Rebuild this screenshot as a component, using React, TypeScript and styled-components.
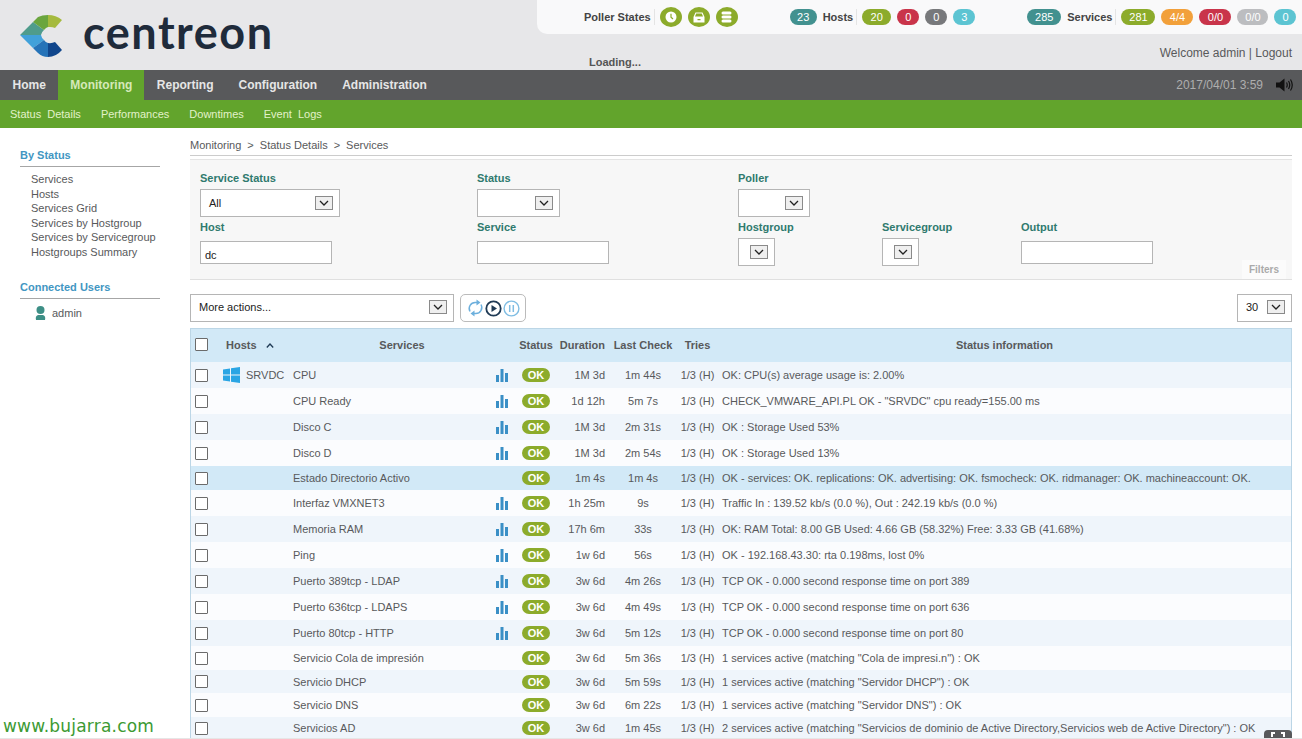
import React from "react";
import styled, { createGlobalStyle } from "styled-components";

const Global = createGlobalStyle`
  html, body { margin: 0; padding: 0; height: 739px; overflow: hidden; background: #fff; }
  body { font-family: "Liberation Sans", Arial, sans-serif; font-size: 11px; color: #58595b; }
  * { box-sizing: border-box; }
`;

const Page = styled.div`
  width: 1302px; height: 739px; position: relative; overflow: hidden;
  display: flex; flex-direction: column; background: #fff;
`;
const Header = styled.header`
  height: 70px; flex: none; background: #e7e7e9; display: flex; justify-content: space-between;
`;
const Brand = styled.div`
  display: flex; align-items: flex-start; padding: 15px 0 0 20px; gap: 21px;
`;
const BrandName = styled.span`
  font-family: "Lato", sans-serif; font-weight: 700; font-size: 45px; line-height: 40px;
  color: #1f2b3b; letter-spacing: 1.5px; margin-top: -3px;
`;
const HeaderRight = styled.div`
  width: 765px; flex: none; display: flex; flex-direction: column;
`;
const TopPanel = styled.div`
  height: 34px; flex: none; background: #f9f9fa; border-bottom-left-radius: 10px;
  display: flex; align-items: center; padding: 0 0 0 47px; color: #3a3a3a;
`;
const TopLabel = styled.span`
  font-weight: 700; font-size: 11px; color: #444; white-space: nowrap;
`;
const TopSep = styled.span`
  width: 1px; height: 16px; background: #e4e4e4; margin: 0 5px 0 3px;
`;
const Round = styled.span`
  width: 22px; height: 20px; border-radius: 50%; background: #8cab2b; margin-right: 6px;
  display: flex; align-items: center; justify-content: center;
`;
const Pill = styled.span<{ $bg: string; $w: number; $ml?: number; $mr?: number }>`
  height: 16px; border-radius: 9px; background: ${p => p.$bg}; width: ${p => p.$w}px;
  margin-left: ${p => p.$ml ?? 0}px; margin-right: ${p => p.$mr ?? 6}px;
  color: #fff; font-size: 11px; display: flex; align-items: center; justify-content: center;
`;
const Welcome = styled.div`
  text-align: right; padding: 12px 10px 0 0; font-size: 12px; color: #58595b; line-height: 14px;
`;
const Loading = styled.div`
  margin-top: -4px; padding-left: 52px; font-weight: 700; font-size: 11px; color: #555; line-height: 13px;
`;
const Nav = styled.nav`
  height: 30px; flex: none; background: #58595b; display: flex; align-items: stretch;
`;
const NavItem = styled.div<{ $active?: boolean }>`
  display: flex; align-items: center; padding: ${p => (p.$active ? "0 12px" : "0 12.5px")};
  font-weight: 700; font-size: 12px; white-space: nowrap;
  background: ${p => (p.$active ? "#62a42c" : "transparent")};
  color: ${p => (p.$active ? "#d6e9b9" : "#e6e6e6")};
`;
const NavRight = styled.div`
  margin-left: auto; display: flex; align-items: center; padding-right: 9px; gap: 13px;
  color: #aeaeae; font-size: 12px;
`;
const SubNav = styled.div`
  height: 28px; flex: none; background: #62a42c; display: flex; align-items: center;
  padding-left: 10px; gap: 20px; color: #e3f2c9; font-size: 11px; word-spacing: 3px;
`;
const Body = styled.div`
  flex: 1; display: flex; min-height: 0;
`;
const Side = styled.aside`
  width: 190px; flex: none; padding: 20px 0 0 20px;
`;
const SideTitle = styled.div<{ $mt?: number }>`
  width: 140px; font-weight: 700; font-size: 11px; color: #4296c2; height: 19px; line-height: 14px;
  border-bottom: 1px solid #a6a6a6; margin-top: ${p => p.$mt ?? 0}px;
`;
const SideList = styled.div`
  padding: 5px 0 0 11px; line-height: 14.6px; color: #58595b; font-size: 11px;
`;
const UserRow = styled.div`
  display: flex; align-items: center; gap: 6px; padding: 7px 0 0 15px; font-size: 11px; color: #58595b;
`;
const Main = styled.main`
  width: 1102px; flex: none; display: flex; flex-direction: column; position: relative;
`;
const Crumb = styled.div`
  height: 28px; padding-top: 11px; line-height: 13px; font-size: 11px; color: #58595b;
  border-bottom: 1px solid #ccc;
`;
const CrumbSep = styled.span`
  margin: 0 6px;
`;
const Filters = styled.section`
  margin-top: 3px; height: 121px; background: #f7f7f7; border-top: 1px solid #e4e4e4;
  border-bottom: 1px solid #e0e0e0; padding: 12px 0 0 10px; position: relative;
  display: grid; grid-template-columns: 277px 261px 144px 139px 1fr; grid-template-rows: 49px 1fr;
`;
const Field = styled.div`
  display: flex; flex-direction: column; align-items: flex-start;
`;
const Label = styled.label<{ $gap: number }>`
  font-weight: 700; font-size: 11px; line-height: 13px; color: #2f7a6e; margin-bottom: ${p => p.$gap}px;
`;
const Select = styled.div<{ $w: number; $pad?: number }>`
  width: ${p => p.$w}px; height: 28px; border: 1px solid #b5b5b5; background: #fff;
  display: flex; align-items: center; justify-content: space-between;
  padding: 0 6px 0 ${p => p.$pad ?? 8}px; font-size: 11px; color: #222; flex: none;
`;
const ActionSelect = styled(Select)`
  padding-bottom: 2px;
`;
const Arrow = styled.span`
  width: 18px; height: 14px; border: 1px solid #8a8a8a; background: #efefef; flex: none;
  display: flex; align-items: center; justify-content: center;
`;
const Input = styled.div`
  width: 132px; height: 23px; border: 1px solid #b5b5b5; background: #fff; padding: 0 4px;
  font-size: 11px; color: #222; line-height: 26px;
`;
const FilterTab = styled.div`
  position: absolute; right: 6px; bottom: 0; width: 44px; height: 19px; background: #fbfbfb;
  color: #aaa; font-weight: 700; font-size: 10px; line-height: 20px; text-align: center;
`;
const Actions = styled.div`
  height: 28px; margin-top: 14px; display: flex; align-items: center; gap: 6px;
`;
const IconGroup = styled.div`
  width: 66px; height: 28px; border: 1px solid #bbb; border-radius: 5px; background: #fff;
  display: flex; align-items: center; justify-content: center; gap: 1px;
`;
const PageSize = styled.div`
  margin-left: auto;
`;
const Table = styled.div`
  margin-top: 6px; border: 1px solid #bcd6e6; border-bottom: 0; flex: 1; min-height: 0; overflow: hidden;
`;
const cols = "31px 71px 196px 26px 42px 52px 68px 41px 1fr";
const HeadRow = styled.div`
  height: 33px; padding-bottom: 2px; background: #d2e9f7; display: grid; grid-template-columns: ${cols}; align-items: center;
  font-weight: 700; font-size: 11px; color: #58595b;
`;
const Row = styled.div<{ $h: number; $tone: "a" | "b" | "hl" }>`
  height: ${p => p.$h}px; display: grid; grid-template-columns: ${cols}; align-items: center;
  font-size: 11px; color: #58595b;
  background: ${p => (p.$tone === "hl" ? "#d2e9f7" : p.$tone === "a" ? "#eff5fb" : "#fbfcfe")};
`;
const Check = styled.span`
  width: 13px; height: 13px; border: 1px solid #6b6b6b; background: #fff; border-radius: 1px; margin-left: 4px; display: block;
`;
const Center = styled.span<{ $pl?: number }>`
  text-align: center; white-space: nowrap; padding-left: ${p => p.$pl ?? 0}px;
`;
const RightCell = styled.span`
  text-align: right; white-space: nowrap; padding-right: 4px;
`;
const HostCell = styled.span`
  display: flex; align-items: center; gap: 6px; padding-left: 1px;
`;
const HostsHead = styled.span`
  display: flex; align-items: center; gap: 9px; padding-left: 4px;
`;
const Info = styled.span`
  padding-left: 4px; white-space: nowrap;
`;
const Ok = styled.span`
  width: 28px; height: 14px; border-radius: 8px; background: #8cab2b; color: #fff; font-weight: 700;
  font-size: 11px; line-height: 14px; text-align: center; justify-self: center; display: block;
`;
const Watermark = styled.div`
  position: absolute; left: 3px; top: 715px; font-family: "DejaVu Sans", sans-serif; font-size: 17px;
  line-height: 22px; color: #3c9a33; letter-spacing: 0.2px;
`;
const Full = styled.div`
  position: absolute; left: 1264px; top: 730px; width: 28px; height: 12px; background: #58595b;
  border-radius: 4px 4px 0 0; display: flex; justify-content: center; padding-top: 2px;
`;
const Foot = styled.div`
  position: absolute; left: 0; right: 0; bottom: 0; height: 1px; background: #e6e6e6;
`;

const Logo = () => (
  <svg width="42" height="42" viewBox="20 15 42 42">
    <path fill="#4f9c8c" d="M20 35 L33 22 L44 30 Q41.5 32 41 35 Z" />
    <path fill="#6aa53e" d="M33 22 L38 17 Q42 15 48 15 L48 27 Q46 27.5 44 30 Z" />
    <path fill="#a5ba3e" d="M48 15 Q56 15 62 20 L55 28 Q52 26.5 48 27 Z" />
    <path fill="#41a1da" d="M20 35 L41 35 Q41.5 38 44 40 L33 48 Z" />
    <path fill="#2573b8" d="M33 48 L44 40 Q46 43 48 43 L48 57 Q42 57 38 53 Z" />
    <path fill="#10468c" d="M48 43 Q52 43.5 55 42 L62 50 Q56 57 48 57 Z" />
  </svg>
);
const ClockIcon = () => (
  <svg width="12" height="12" viewBox="0 0 12 12">
    <circle cx="6" cy="6" r="5.5" fill="#fff" />
    <path d="M6 2.8V6.2L8 8" stroke="#8cab2b" strokeWidth="1.2" fill="none" />
  </svg>
);
const BoxIcon = () => (
  <svg width="12" height="11" viewBox="0 0 12 11">
    <path fill="#fff" d="M2.5 0.5h7l2 4.5v5.5H.5V5z" />
    <path fill="#8cab2b" d="M3.2 1.6h5.6l1.2 3H2zM4.5 7h3v1.2h-3z" />
  </svg>
);
const DbIcon = () => (
  <svg width="11" height="12" viewBox="0 0 11 12">
    <rect x="0.5" y="0.5" width="10" height="3" rx="1.5" fill="#fff" />
    <rect x="0.5" y="4.5" width="10" height="3" rx="1.5" fill="#fff" />
    <rect x="0.5" y="8.5" width="10" height="3" rx="1.5" fill="#fff" />
  </svg>
);
const Speaker = () => (
  <svg width="17" height="14" viewBox="0 0 17 14">
    <path fill="#111" d="M0 4.5h3.5L8.5 .5v13l-5-4H0z" />
    <path fill="none" stroke="#111" strokeWidth="1.2" d="M10.5 4.5q1.5 2.5 0 5M12.5 3q2.5 4 0 8M14.5 1.5q3.5 5.5 0 11" />
  </svg>
);
const Chevron = () => (
  <svg width="10" height="6" viewBox="0 0 10 6">
    <path d="M1 1l4 4 4-4" fill="none" stroke="#222" strokeWidth="1.3" />
  </svg>
);
const User = () => (
  <svg width="11" height="14" viewBox="0 0 11 14">
    <circle cx="5.5" cy="4" r="4" fill="#3d8f86" />
    <path fill="#3d8f86" d="M1 14q-1-4 2-5h5q3 1 2 5z" />
  </svg>
);
const Sync = () => (
  <svg width="17" height="18" viewBox="0 0 17 18">
    <g fill="none" stroke="#6db0dd" strokeWidth="1.4">
      <path d="M3 12.5A6 6 0 0 1 8.5 3.5H10" />
      <path d="M14 5.5A6 6 0 0 1 8.5 14.5H7" />
    </g>
    <path fill="#6db0dd" d="M9.5 0.5l4 3-4 3zM7.5 11.5l-4 3 4 3z" />
  </svg>
);
const Play = () => (
  <svg width="17" height="17" viewBox="0 0 17 17">
    <circle cx="8.5" cy="8.5" r="7.2" fill="none" stroke="#1f3a55" strokeWidth="1.8" />
    <path fill="#1f3a55" d="M6.5 5l5.5 3.5L6.5 12z" />
  </svg>
);
const Pause = () => (
  <svg width="17" height="17" viewBox="0 0 17 17">
    <circle cx="8.5" cy="8.5" r="7.4" fill="none" stroke="#7fbde3" strokeWidth="1.4" />
    <path stroke="#7fbde3" strokeWidth="1.5" d="M6.7 5v7M10.3 5v7" />
  </svg>
);
const Bars = () => (
  <svg width="12" height="13" viewBox="0 0 12 13" style={{ justifySelf: "center" }}>
    <rect x="0" y="6" width="3" height="7" fill="#3a8fc6" />
    <rect x="4.5" y="0" width="3" height="13" fill="#3a8fc6" />
    <rect x="9" y="4" width="3" height="9" fill="#3a8fc6" />
  </svg>
);
const Win = () => (
  <svg width="17" height="16" viewBox="0 0 17 16">
    <path fill="#2aa5e4" d="M0 2.6L7 1.5V7.5H0zM8 1.3L17 0V7.5H8zM0 8.5H7V14.5L0 13.4zM8 8.5H17V16L8 14.7z" />
  </svg>
);
const SortUp = () => (
  <svg width="8" height="5" viewBox="0 0 8 5" style={{ marginTop: 2 }}>
    <path d="M.8 4.5L4 1l3.2 3.5" fill="none" stroke="#1f3a55" strokeWidth="1.3" />
  </svg>
);
const Expand = () => (
  <svg width="14" height="10" viewBox="0 0 14 10">
    <path fill="#fff" d="M0 0h4v2H2v3H0zM14 0h-4v2h2v3h2z" />
  </svg>
);

type Svc = { name: string; graph?: boolean; dur: string; last: string; info: string; h: number; tone: "a" | "b" | "hl"; host?: boolean };
const rows: Svc[] = [
  { name: "CPU", graph: true, dur: "1M 3d", last: "1m 44s", info: "OK: CPU(s) average usage is: 2.00%", h: 26, tone: "a", host: true },
  { name: "CPU Ready", graph: true, dur: "1d 12h", last: "5m 7s", info: 'CHECK_VMWARE_API.PL OK - "SRVDC" cpu ready=155.00 ms', h: 26, tone: "b" },
  { name: "Disco C", graph: true, dur: "1M 3d", last: "2m 31s", info: "OK : Storage Used 53%", h: 26, tone: "a" },
  { name: "Disco D", graph: true, dur: "1M 3d", last: "2m 54s", info: "OK : Storage Used 13%", h: 26, tone: "b" },
  { name: "Estado Directorio Activo", dur: "1m 4s", last: "1m 4s", info: "OK - services: OK. replications: OK. advertising: OK. fsmocheck: OK. ridmanager: OK. machineaccount: OK.", h: 24, tone: "hl" },
  { name: "Interfaz VMXNET3", graph: true, dur: "1h 25m", last: "9s", info: "Traffic In : 139.52 kb/s (0.0 %), Out : 242.19 kb/s (0.0 %)", h: 26, tone: "b" },
  { name: "Memoria RAM", graph: true, dur: "17h 6m", last: "33s", info: "OK: RAM Total: 8.00 GB Used: 4.66 GB (58.32%) Free: 3.33 GB (41.68%)", h: 26, tone: "a" },
  { name: "Ping", graph: true, dur: "1w 6d", last: "56s", info: "OK - 192.168.43.30: rta 0.198ms, lost 0%", h: 26, tone: "b" },
  { name: "Puerto 389tcp - LDAP", graph: true, dur: "3w 6d", last: "4m 26s", info: "TCP OK - 0.000 second response time on port 389", h: 26, tone: "a" },
  { name: "Puerto 636tcp - LDAPS", graph: true, dur: "3w 6d", last: "4m 49s", info: "TCP OK - 0.000 second response time on port 636", h: 26, tone: "b" },
  { name: "Puerto 80tcp - HTTP", graph: true, dur: "3w 6d", last: "5m 12s", info: "TCP OK - 0.000 second response time on port 80", h: 26, tone: "a" },
  { name: "Servicio Cola de impresión", dur: "3w 6d", last: "5m 36s", info: '1 services active (matching "Cola de impresi.n") : OK', h: 24, tone: "b" },
  { name: "Servicio DHCP", dur: "3w 6d", last: "5m 59s", info: '1 services active (matching "Servidor DHCP") : OK', h: 23, tone: "a" },
  { name: "Servicio DNS", dur: "3w 6d", last: "6m 22s", info: '1 services active (matching "Servidor DNS") : OK', h: 24, tone: "b" },
  { name: "Servicios AD", dur: "3w 6d", last: "1m 45s", info: '2 services active (matching "Servicios de dominio de Active Directory,Servicios web de Active Directory") : OK', h: 22, tone: "a" },
];

const App = () => (
  <Page>
    <Global />
    <Header>
      <Brand>
        <Logo />
        <BrandName>centreon</BrandName>
      </Brand>
      <HeaderRight>
        <TopPanel>
          <TopLabel>Poller States</TopLabel>
          <TopSep />
          <Round><ClockIcon /></Round>
          <Round><BoxIcon /></Round>
          <Round><DbIcon /></Round>
          <Pill $bg="#42918f" $w={27} $ml={46}>23</Pill>
          <TopLabel>Hosts</TopLabel>
          <TopSep />
          <Pill $bg="#8cab2b" $w={29}>20</Pill>
          <Pill $bg="#c9344a" $w={22}>0</Pill>
          <Pill $bg="#77787b" $w={22}>0</Pill>
          <Pill $bg="#5cc4d2" $w={22}>3</Pill>
          <Pill $bg="#42918f" $w={34} $ml={46}>285</Pill>
          <TopLabel>Services</TopLabel>
          <TopSep />
          <Pill $bg="#8cab2b" $w={34}>281</Pill>
          <Pill $bg="#f2a03a" $w={32}>4/4</Pill>
          <Pill $bg="#c9344a" $w={32}>0/0</Pill>
          <Pill $bg="#bcbdc0" $w={31}>0/0</Pill>
          <Pill $bg="#5cc4d2" $w={22} $mr={0}>0</Pill>
        </TopPanel>
        <Welcome>Welcome admin | Logout</Welcome>
        <Loading>Loading...</Loading>
      </HeaderRight>
    </Header>
    <Nav>
      <NavItem>Home</NavItem>
      <NavItem $active>Monitoring</NavItem>
      <NavItem>Reporting</NavItem>
      <NavItem>Configuration</NavItem>
      <NavItem>Administration</NavItem>
      <NavRight>
        <span>2017/04/01 3:59</span>
        <Speaker />
      </NavRight>
    </Nav>
    <SubNav>
      <span>Status Details</span>
      <span>Performances</span>
      <span>Downtimes</span>
      <span>Event Logs</span>
    </SubNav>
    <Body>
      <Side>
        <SideTitle>By Status</SideTitle>
        <SideList>
          <div>Services</div>
          <div>Hosts</div>
          <div>Services Grid</div>
          <div>Services by Hostgroup</div>
          <div>Services by Servicegroup</div>
          <div>Hostgroups Summary</div>
        </SideList>
        <SideTitle $mt={20}>Connected Users</SideTitle>
        <UserRow><User /><span>admin</span></UserRow>
      </Side>
      <Main>
        <Crumb>Monitoring<CrumbSep>&gt;</CrumbSep>Status Details<CrumbSep>&gt;</CrumbSep>Services</Crumb>
        <Filters>
          <Field><Label $gap={4}>Service Status</Label><Select $w={140}>All<Arrow><Chevron /></Arrow></Select></Field>
          <Field><Label $gap={4}>Status</Label><Select $w={83}><span /><Arrow><Chevron /></Arrow></Select></Field>
          <Field><Label $gap={4}>Poller</Label><Select $w={72}><span /><Arrow><Chevron /></Arrow></Select></Field>
          <span />
          <span />
          <Field><Label $gap={7}>Host</Label><Input>dc</Input></Field>
          <Field><Label $gap={7}>Service</Label><Input /></Field>
          <Field><Label $gap={4}>Hostgroup</Label><Select $w={37} $pad={6}><span /><Arrow><Chevron /></Arrow></Select></Field>
          <Field><Label $gap={4}>Servicegroup</Label><Select $w={37} $pad={6}><span /><Arrow><Chevron /></Arrow></Select></Field>
          <Field><Label $gap={7}>Output</Label><Input /></Field>
          <FilterTab>Filters</FilterTab>
        </Filters>
        <Actions>
          <ActionSelect $w={264}>More actions...<Arrow><Chevron /></Arrow></ActionSelect>
          <IconGroup><Sync /><Play /><Pause /></IconGroup>
          <PageSize><ActionSelect $w={55}>30<Arrow><Chevron /></Arrow></ActionSelect></PageSize>
        </Actions>
        <Table>
          <HeadRow>
            <Check />
            <HostsHead>Hosts <SortUp /></HostsHead>
            <Center $pl={22}>Services</Center>
            <span />
            <Center>Status</Center>
            <RightCell>Duration</RightCell>
            <Center>Last Check</Center>
            <Center>Tries</Center>
            <Center>Status information</Center>
          </HeadRow>
          {rows.map(r => (
            <Row key={r.name} $h={r.h} $tone={r.tone}>
              <Check />
              <HostCell>{r.host && <><Win /><span>SRVDC</span></>}</HostCell>
              <span>{r.name}</span>
              {r.graph ? <Bars /> : <span />}
              <Ok>OK</Ok>
              <RightCell>{r.dur}</RightCell>
              <Center>{r.last}</Center>
              <Center>1/3 (H)</Center>
              <Info>{r.info}</Info>
            </Row>
          ))}
        </Table>
      </Main>
    </Body>
    <Watermark>www.bujarra.com</Watermark>
    <Full><Expand /></Full>
    <Foot />
  </Page>
);

export default App;
